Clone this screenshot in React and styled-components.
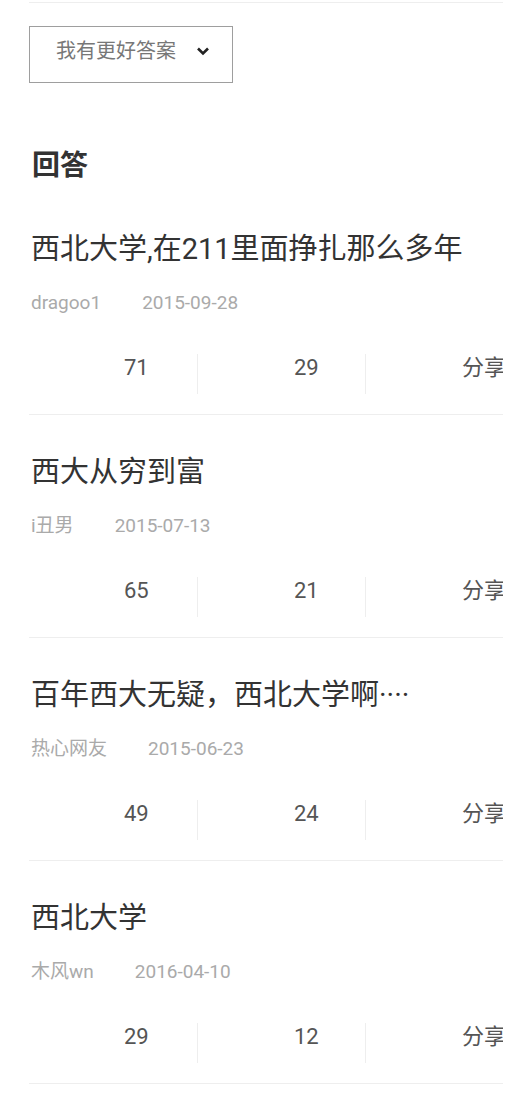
import React from "react";
import styled, { createGlobalStyle } from "styled-components";

const GlobalStyle = createGlobalStyle`
  html, body {
    margin: 0;
    padding: 0;
    background: #fff;
    overflow-x: hidden;
  }
  body {
    font-family: Roboto, "Noto Sans CJK SC", "Noto Sans", sans-serif;
    color: #333;
  }
`;

const Page = styled.div`
  width: 507px;
  box-sizing: border-box;
  padding: 2px 4px 0 29px;
  overflow: hidden;
`;

const TopRule = styled.div`
  height: 1px;
  background: #eee;
`;

const MoreButton = styled.button`
  box-sizing: border-box;
  margin-top: 23px;
  width: 204px;
  height: 57px;
  padding: 0 0 8px 26px;
  display: flex;
  align-items: center;
  gap: 20px;
  background: #fff;
  border: 1px solid #9e9e9e;
  font-family: inherit;
  font-size: 20px;
  color: #777;
  line-height: 1;
  cursor: pointer;
`;

const SectionTitle = styled.h2`
  margin: 65px 0 8px;
  font-size: 28px;
  line-height: 36px;
  font-weight: 700;
  color: #333;
  padding-left: 3px;
`;

const Item = styled.div`
  padding: 37px 0 20px;
  border-bottom: 1px solid #eee;
`;

const Title = styled.div`
  font-size: 29px;
  line-height: 40px;
  color: #333;
  padding-left: 2px;
  white-space: nowrap;
`;

const Meta = styled.div`
  margin-top: 22px;
  display: flex;
  font-size: 19px;
  line-height: 24px;
  color: #aaa;
  padding-left: 2px;
`;

const Author = styled.span`
  margin-right: 41px;
`;

const Stats = styled.div`
  margin-top: 39px;
  display: grid;
  grid-template-columns: repeat(3, 168px);
  height: 40px;
  overflow: hidden;
`;

const Stat = styled.div`
  box-sizing: border-box;
  padding-left: ${(p) => (p.$first ? 95 : 96)}px;
  border-left: ${(p) => (p.$first ? "none" : "1px solid #eee")};
  font-size: 22px;
  line-height: 28px;
  color: #555;
  white-space: nowrap;
`;

const Chevron = () => (
  <svg width="14" height="10" viewBox="0 0 14 10">
    <path d="M2 2.5 L7 7.5 L12 2.5" fill="none" stroke="#222" strokeWidth="2.6" />
  </svg>
);

const answers = [
  { title: "西北大学,在211里面挣扎那么多年", author: "dragoo1", date: "2015-09-28", up: 71, down: 29 },
  { title: "西大从穷到富", author: "i丑男", date: "2015-07-13", up: 65, down: 21 },
  { title: "百年西大无疑，西北大学啊····", author: "热心网友", date: "2015-06-23", up: 49, down: 24 },
  { title: "西北大学", author: "木风wn", date: "2016-04-10", up: 29, down: 12 },
];

export default function App() {
  return (
    <>
      <GlobalStyle />
      <Page>
        <TopRule />
        <MoreButton>
          我有更好答案
          <Chevron />
        </MoreButton>
        <SectionTitle>回答</SectionTitle>
        {answers.map((a) => (
          <Item key={a.title}>
            <Title>{a.title}</Title>
            <Meta>
              <Author>{a.author}</Author>
              <span>{a.date}</span>
            </Meta>
            <Stats>
              <Stat $first>{a.up}</Stat>
              <Stat>{a.down}</Stat>
              <Stat>分享</Stat>
            </Stats>
          </Item>
        ))}
      </Page>
    </>
  );
}
